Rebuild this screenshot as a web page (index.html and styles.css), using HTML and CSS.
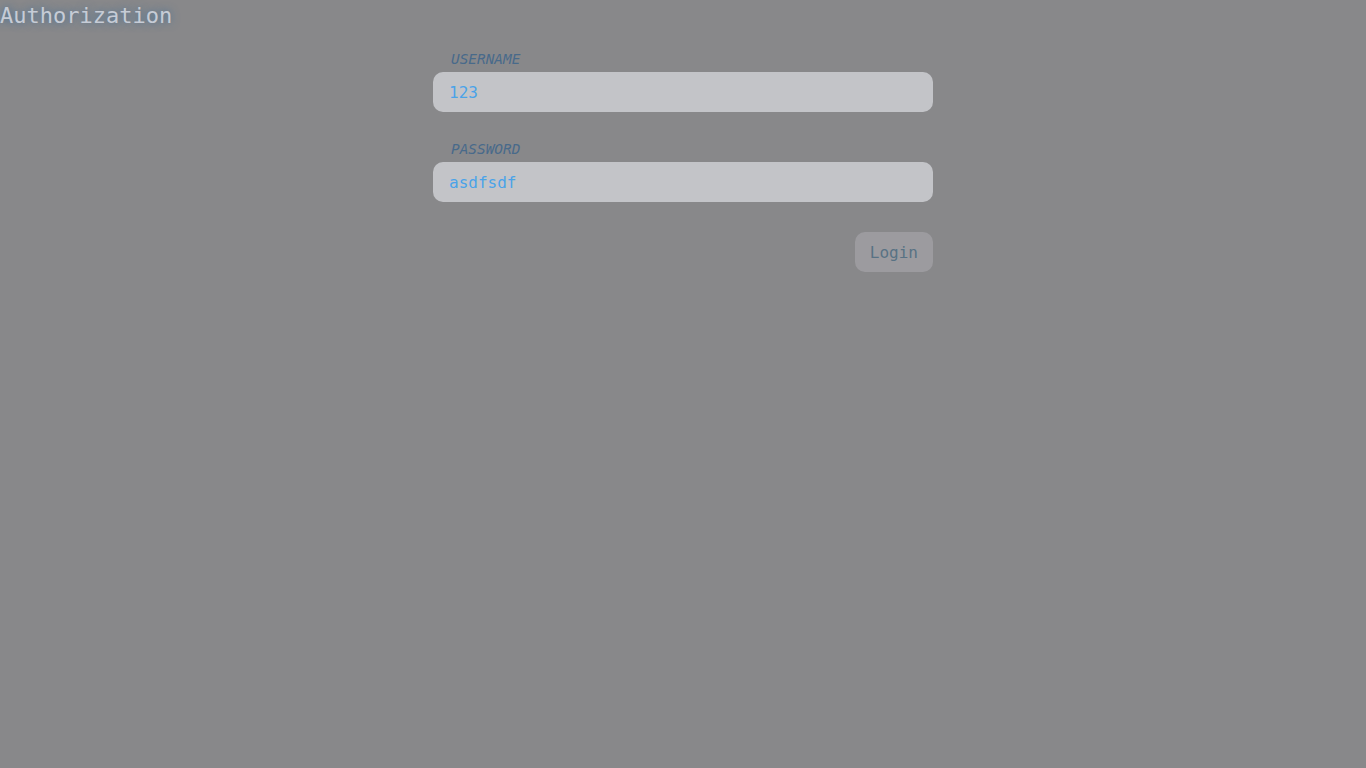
FILE: index.html
```html
<!DOCTYPE html>
<html>
<head>
<meta charset="utf-8">
<link rel="stylesheet" href="styles.css">
</head>
<body>
<h1 class="title">Authorization</h1>
<form class="form">
  <label class="label">USERNAME</label>
  <input class="input" type="text" value="123">
  <label class="label label-gap">PASSWORD</label>
  <input class="input" type="text" value="asdfsdf">
  <div class="actions">
    <button class="btn" type="button">Login</button>
  </div>
</form>
</body>
</html>
```

FILE: styles.css
```css
html, body {
  margin: 0;
  padding: 0;
  background: #88888a;
  height: 100%;
  font-family: "DejaVu Sans Mono", monospace;
}
.title {
  margin: 0;
  font-size: 22px;
  font-weight: normal;
  line-height: 32px;
  color: #c6ccd6;
  text-shadow: 0 0 8px #3a6c98;
  display: inline-block;
}
.form {
  width: 500px;
  margin: 17px auto 0;
  display: flex;
  flex-direction: column;
}
.label {
  font-style: italic;
  font-size: 14.4px;
  line-height: 20px;
  color: #486a8a;
  padding-left: 18px;
  margin-bottom: 3px;
}
.label-gap {
  margin-top: 27px;
}
.input {
  box-sizing: border-box;
  height: 40px;
  border: none;
  border-radius: 10px;
  background: #c3c4c8;
  padding: 0 16px;
  font-family: "DejaVu Sans Mono", monospace;
  font-size: 16px;
  color: #4aa3e8;
  outline: none;
}
.actions {
  display: flex;
  justify-content: flex-end;
  margin-top: 30px;
}
.btn {
  height: 40px;
  padding: 0 15px;
  border: none;
  border-radius: 10px;
  background: #9c9b9f;
  color: #587284;
  font-family: "DejaVu Sans Mono", monospace;
  font-size: 16px;
}
```
